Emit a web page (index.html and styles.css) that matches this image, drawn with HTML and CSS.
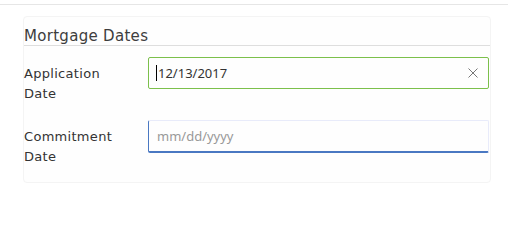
FILE: index.html
```html
<!DOCTYPE html>
<html>
<head>
<meta charset="utf-8">
<link rel="stylesheet" href="styles.css">
</head>
<body>
<div class="topbar"></div>
<section class="card">
  <h2 class="title">Mortgage Dates</h2>
  <div class="row">
    <label class="label">Application<br>Date</label>
    <div class="field field-valid">
      <span class="caret"></span><span class="value">12/13/2017</span>
      <svg class="clear" width="10" height="10" viewBox="0 0 10 10"><path d="M0.5 0.5L9.5 9.5M9.5 0.5L0.5 9.5" stroke="#777" stroke-width="1" fill="none"/></svg>
    </div>
  </div>
  <div class="row">
    <label class="label">Commitment<br>Date</label>
    <div class="field field-focus">
      <span class="placeholder">mm/dd/yyyy</span>
    </div>
  </div>
</section>
</body>
</html>
```
FILE: styles.css
```css
html, body {
  margin: 0;
  padding: 0;
  background: #fff;
}
body {
  width: 514px;
  height: 222px;
  overflow: hidden;
  font-family: "DejaVu Sans", "Noto Sans", sans-serif;
}
.topbar {
  width: 508px;
  height: 4px;
  border-bottom: 1px solid #e6e6e6;
}
.card {
  margin: 11px 0 0 23px;
  width: 466px;
  height: 165px;
  border: 1px solid #f4f4f4;
  border-radius: 4px;
  background: #fefefe;
  box-sizing: content-box;
}
.title {
  margin: 0;
  padding: 10px 0 0 0;
  font-size: 15px;
  font-weight: normal;
  color: #3d3d3d;
  line-height: 18px;
  border-bottom: 1px solid #dedede;
  letter-spacing: 0.3px;
}
.row {
  display: grid;
  grid-template-columns: 124px 341px;
  align-items: start;
  margin-top: 11px;
}
.row + .row {
  margin-top: 16px;
}
.label {
  font-size: 13px;
  line-height: 20px;
  color: #333;
  padding-top: 7px;
  letter-spacing: 0.3px;
}
.field {
  height: 32px;
  box-sizing: border-box;
  border-radius: 2px;
  display: flex;
  align-items: center;
  padding-left: 7px;
  font-family: "Noto Sans", "Open Sans", sans-serif;
  font-size: 13px;
}
.field-valid {
  border: 1px solid #7cc04b;
}
.field-focus {
  height: 33px;
  border: 1px solid #e8ebfa;
  border-left-color: #4a78c2;
  border-bottom: 2px solid #4a78c2;
}
.caret {
  width: 1px;
  height: 16px;
  background: #000;
  margin-right: 1px;
}
.value {
  color: #333;
  flex: 1;
}
.clear {
  margin-right: 10px;
}
.placeholder {
  color: #999;
  padding-left: 1px;
}
```
